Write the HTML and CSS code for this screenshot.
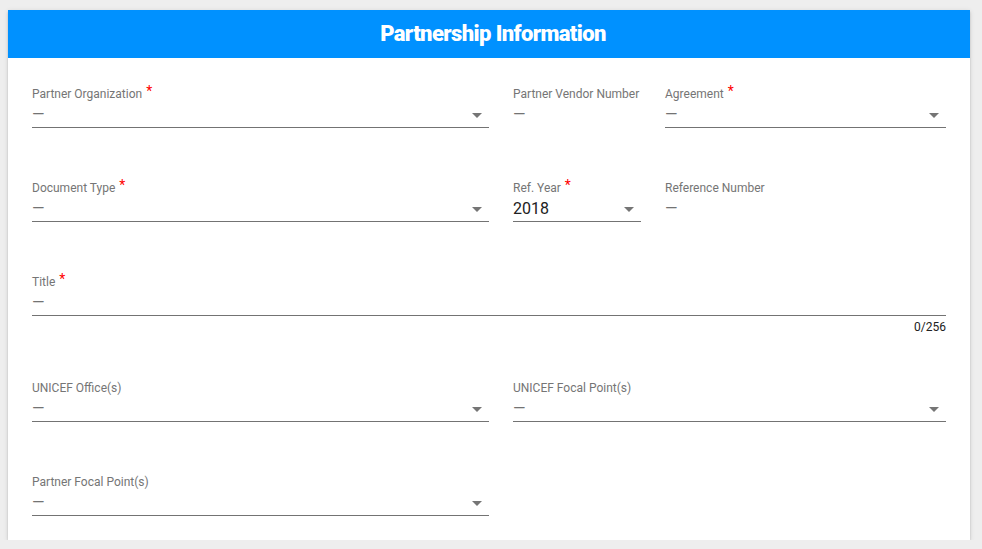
FILE: index.html
```html
<!DOCTYPE html>
<html lang="en">
<head>
    <meta charset="UTF-8">
    <meta name="viewport" content="width=device-width, initial-scale=1.0">
    <title>Partnership Information</title>
    <link rel="stylesheet" href="styles.css">
</head>
<body>
    <div class="card">
        <div class="card-header">Partnership Information</div>
        <div class="card-body">
            <div class="row row-three">
                <div class="field required">
                    <label>Partner Organization</label>
                    <div class="value empty">—<svg class="arrow" viewBox="0 0 24 24"><path d="M7 10l5 5 5-5z"/></svg></div>
                </div>
                <div class="field readonly">
                    <label>Partner Vendor Number</label>
                    <div class="value empty">—</div>
                </div>
                <div class="field required">
                    <label>Agreement</label>
                    <div class="value empty">—<svg class="arrow" viewBox="0 0 24 24"><path d="M7 10l5 5 5-5z"/></svg></div>
                </div>
            </div>

            <div class="row row-three">
                <div class="field required">
                    <label>Document Type</label>
                    <div class="value empty">—<svg class="arrow" viewBox="0 0 24 24"><path d="M7 10l5 5 5-5z"/></svg></div>
                </div>
                <div class="field required">
                    <label>Ref. Year</label>
                    <div class="value">2018<svg class="arrow" viewBox="0 0 24 24"><path d="M7 10l5 5 5-5z"/></svg></div>
                </div>
                <div class="field readonly">
                    <label>Reference Number</label>
                    <div class="value empty">—</div>
                </div>
            </div>

            <div class="row">
                <div class="field required">
                    <label>Title</label>
                    <div class="value empty">—</div>
                    <div class="counter">0/256</div>
                </div>
            </div>

            <div class="row row-two">
                <div class="field">
                    <label>UNICEF Office(s)</label>
                    <div class="value empty">—<svg class="arrow" viewBox="0 0 24 24"><path d="M7 10l5 5 5-5z"/></svg></div>
                </div>
                <div class="field">
                    <label>UNICEF Focal Point(s)</label>
                    <div class="value empty">—<svg class="arrow" viewBox="0 0 24 24"><path d="M7 10l5 5 5-5z"/></svg></div>
                </div>
            </div>

            <div class="row row-two">
                <div class="field">
                    <label>Partner Focal Point(s)</label>
                    <div class="value empty">—<svg class="arrow" viewBox="0 0 24 24"><path d="M7 10l5 5 5-5z"/></svg></div>
                </div>
            </div>
        </div>
    </div>
</body>
</html>
```

FILE: styles.css
```css
body {
    font-family: Roboto, "Noto Sans", sans-serif;
    margin: 0;
    padding: 10px 12px 0 8px;
    background-color: #eeeeee;
}

.card {
    width: 962px;
    background-color: #fff;
    box-shadow: 0 2px 2px rgba(0, 0, 0, 0.14),
                0 1px 5px rgba(0, 0, 0, 0.12),
                0 3px 1px -2px rgba(0, 0, 0, 0.2);
}

.card-header {
    height: 48px;
    line-height: 48px;
    padding-left: 8px;
    background-color: #0091ff;
    color: #fff;
    text-align: center;
    font-size: 22px;
    font-weight: 900;
    letter-spacing: -0.6px;
}

.card-body {
    padding: 26px 24px 24px 24px;
    display: flex;
    flex-direction: column;
    gap: 50px;
}

.row {
    display: grid;
    grid-template-columns: 1fr;
    column-gap: 24px;
}

.row-three {
    grid-template-columns: 457px 128px 281px;
}

.row-two {
    grid-template-columns: 457px 433px;
}

.field label {
    display: block;
    height: 16px;
    padding-top: 2px;
    font-size: 12px;
    line-height: 16px;
    color: #757575;
    white-space: nowrap;
}

.field.required label::after {
    content: "*";
    color: #ff0000;
    font-size: 14px;
    line-height: 0;
    margin-left: 4px;
    position: relative;
    top: -2px;
}

.value {
    display: flex;
    align-items: center;
    justify-content: space-between;
    height: 22px;
    padding: 2px 0 1px 0;
    font-size: 16px;
    line-height: 22px;
    color: #212121;
    border-bottom: 1px solid #737373;
}

.value.empty {
    color: #737373;
}

.readonly .value {
    border-bottom-color: transparent;
}

.arrow {
    width: 24px;
    height: 24px;
    fill: #757575;
    flex-shrink: 0;
}

.counter {
    margin: 5px 0 -5px 0;
    font-size: 12px;
    line-height: 12px;
    text-align: right;
    color: #212121;
}
```
